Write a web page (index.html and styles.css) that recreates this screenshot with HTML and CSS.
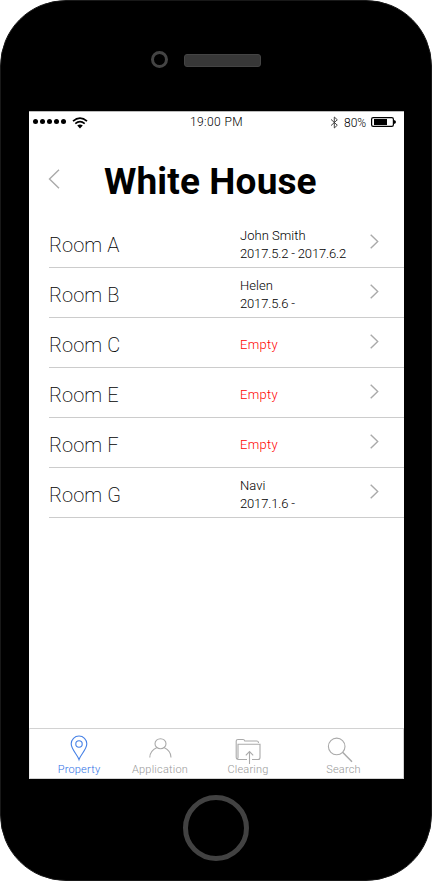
FILE: index.html
```html
<!DOCTYPE html>
<html lang="en">
<head>
<meta charset="utf-8">
<title>White House</title>
<link rel="stylesheet" href="styles.css">
</head>
<body>
<div class="phone">
  <div class="top-bezel"><span class="camera"></span><span class="speaker"></span></div>
  <main class="screen">
    <div class="status">
      <div class="signal">
        <i></i><i></i><i></i><i></i><i></i>
        <svg class="wifi" width="16" height="12" viewBox="0 0 16 12" fill="none" stroke="#000" stroke-width="1.7"><path d="M1 4.2Q8 -1.8 15 4.2M3.3 6.7Q8 2.6 12.7 6.7"/><path d="M5.2 8.6Q8 6.4 10.8 8.6L8 11.5Z" fill="#000" stroke="none"/></svg>
      </div>
      <div class="time">19:00 PM</div>
      <div class="power">
        <svg width="9" height="13" viewBox="0 0 9 13" fill="none" stroke="#333" stroke-width=".9"><path d="M1 3.4L7.3 9.2L4.3 12V1L7.3 3.8L1 9.6"/></svg>
        <span>80%</span>
        <svg width="25" height="10" viewBox="0 0 25 10"><rect x=".6" y=".6" width="21.8" height="8.8" rx="1.6" fill="none" stroke="#000" stroke-width="1.2"/><rect x="3" y="2" width="13" height="6"/><path d="M23 3Q25 3.5 25 5T23 7Z"/></svg>
      </div>
    </div>
    <header class="header">
      <svg width="12" height="20" viewBox="0 0 12 20" fill="none" stroke="#aaa" stroke-width="1.4"><path d="M11 .7L1.5 10L11 19.3"/></svg>
      <h1>White House</h1>
    </header>
    <ul class="rooms">
      <li><span class="room">Room A</span><div class="tenant"><span>John Smith</span><span class="dates">2017.5.2 - 2017.6.2</span></div><svg class="chev" viewBox="0 0 9 15"><path d="M.7 .7L7.7 7.5L.7 14.3"/></svg></li>
      <li><span class="room">Room B</span><div class="tenant"><span>Helen</span><span class="dates">2017.5.6 -</span></div><svg class="chev" viewBox="0 0 9 15"><path d="M.7 .7L7.7 7.5L.7 14.3"/></svg></li>
      <li><span class="room">Room C</span><div class="tenant empty"><span>Empty</span></div><svg class="chev" viewBox="0 0 9 15"><path d="M.7 .7L7.7 7.5L.7 14.3"/></svg></li>
      <li><span class="room">Room E</span><div class="tenant empty"><span>Empty</span></div><svg class="chev" viewBox="0 0 9 15"><path d="M.7 .7L7.7 7.5L.7 14.3"/></svg></li>
      <li><span class="room">Room F</span><div class="tenant empty"><span>Empty</span></div><svg class="chev" viewBox="0 0 9 15"><path d="M.7 .7L7.7 7.5L.7 14.3"/></svg></li>
      <li><span class="room">Room G</span><div class="tenant"><span>Navi</span><span class="dates">2017.1.6 -</span></div><svg class="chev" viewBox="0 0 9 15"><path d="M.7 .7L7.7 7.5L.7 14.3"/></svg></li>
    </ul>
    <nav class="tabs">
      <a class="tab active"><svg width="18" height="28" viewBox="0 0 18 28"><path d="M9 24.6C7.5 19.5 1.2 14.5 1.2 8.8A7.8 7.8 0 0 1 16.8 8.8C16.8 14.5 10.5 19.5 9 24.6Z"/><circle cx="9" cy="9" r="3.2"/></svg><span>Property</span></a>
      <a class="tab"><svg width="24" height="28" viewBox="0 0 24 28"><ellipse cx="12.5" cy="8.7" rx="5.5" ry="5"/><path d="M1.8 22.5C1.8 17 5 14.5 9 12.6M16 12.6C20 14.5 23 17 23 22.5"/></svg><span>Application</span></a>
      <a class="tab"><svg width="26" height="28" viewBox="0 0 26 28" overflow="visible"><path d="M12 24.5H3.5Q1.2 24.5 1.2 22V6Q1.2 4.5 3 4.5H8Q9.5 4.5 9.8 6H22Q23.5 6 23.5 8M17 24.5H23Q25 24.5 25 22.5V9.2H3V22.5Q3 23.8 2 24M14.5 29V17M10.8 20.3L14.5 16.5L18.2 20.3"/></svg><span>Clearing</span></a>
      <a class="tab search"><svg width="26" height="28" viewBox="0 0 26 28"><circle cx="9.7" cy="11.4" r="8.3"/><path d="M15.6 17.3L25 26.7" stroke-width="1.5"/></svg><span>Search</span></a>
    </nav>
  </main>
  <div class="bottom-bezel"><span class="home"></span></div>
</div>
</body>
</html>
```
FILE: styles.css
```css
* { box-sizing: border-box; }
body { margin: 0; background: #fff; font-family: Roboto, sans-serif; font-weight: 300; }
svg { display: block; flex: none; }
.phone { width: 432px; height: 881px; border: 1px solid #181818; border-radius: 66px; background: #000; padding: 0 27px 0 28px; overflow: hidden; }
.top-bezel { height: 110px; display: flex; align-items: flex-start; padding: 50px 0 0 122px; }
.camera { width: 17px; height: 17px; border: 3px solid #444; border-radius: 50%; }
.speaker { width: 77px; height: 13px; margin: 3px 0 0 16px; background: #373737; border: 1px solid #444; border-radius: 3px; }
.screen { width: 375px; height: 668px; background: #fff; border-top: 1px solid #bbb; display: flex; flex-direction: column; }
.status { height: 21px; display: grid; grid-template: 21px / 161px 1fr 82px; font-size: 12px; line-height: 21px; }
.signal { display: flex; align-items: center; gap: 2px; padding: 0 0 2px 4px; }
.signal i { width: 5px; height: 5px; border-radius: 50%; background: #000; }
.wifi { margin: 2px 0 0 4px; }
.time { letter-spacing: .4px; color: #000; }
.power { display: flex; align-items: center; padding: 0 0 1px 8px; color: #000; }
.power span { margin: 2px 4px 0 5px; width: 23px; font-size: 12px; line-height: 14px; }
.header { height: 85px; display: flex; align-items: flex-start; padding: 36px 0 0 19px; }
.header h1 { margin: -7px 0 0 44px; font-size: 37px; line-height: 40px; font-weight: 700; letter-spacing: .13px; white-space: nowrap; }
.rooms { list-style: none; margin: 0 0 0 20px; padding: 0; flex: 1; }
.rooms li { height: 50px; border-bottom: 1px solid #ccc; display: flex; }
.room { width: 191px; padding-top: 15px; font-size: 20px; line-height: 24px; font-weight: 200; letter-spacing: .08px; }
.tenant { width: 130px; padding-top: 9px; display: flex; flex-direction: column; font-size: 13px; line-height: 18px; color: #000; letter-spacing: .02px; white-space: nowrap; }
.dates { letter-spacing: -.16px; }
.tenant.empty { padding-top: 18px; color: #f00; letter-spacing: .3px; }
.chev { width: 9px; height: 15px; margin-top: 16px; fill: none; stroke: #aaa; stroke-width: 1.4; }
.tabs { height: 51px; display: grid; grid-template-columns: 98px 64px 112px 79px; padding-right: 20px; border: 1px solid #d2d2d2; border-left-color: #eee; }
.tab { height: 49px; display: flex; flex-direction: column; align-items: center; color: #999; font-size: 11px; line-height: 14px; letter-spacing: .2px; padding-top: 6px; }
.tab svg { fill: none; stroke: #aaa; stroke-width: 1.1; }
.active svg { stroke: #4580e6; }
.search svg { margin-left: -7px; }
.active { color: #2f70e6; }
.home { width: 66px; height: 66px; border: 5px solid #424242; border-radius: 50%; }
.bottom-bezel { display: flex; padding: 16px 0 0 154px; }
```
